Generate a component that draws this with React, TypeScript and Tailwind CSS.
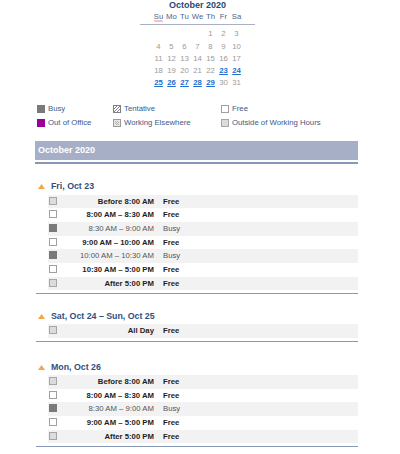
import React from "react";

type Kind = "free" | "busy" | "out";

function Sq({ kind }: { kind: Kind | "ooo" | "tent" | "else" }) {
  if (kind === "tent")
    return (
      <svg width="8" height="8" viewBox="0 0 8 8" className="block">
        <rect x="0.5" y="0.5" width="7" height="7" fill="#fff" stroke="#808080" />
        <path d="M1 4 L4 1 M1 7 L7 1 M4 7 L7 4" stroke="#808080" strokeWidth="1" />
      </svg>
    );
  if (kind === "else")
    return (
      <svg width="8" height="8" viewBox="0 0 8 8" className="block">
        <rect x="0.5" y="0.5" width="7" height="7" fill="#e8e8e8" stroke="#9a9a9a" />
        <rect x="2" y="2" width="1" height="1" fill="#b0b0b0" />
        <rect x="4" y="2" width="1" height="1" fill="#b0b0b0" />
        <rect x="3" y="3" width="1" height="1" fill="#b0b0b0" />
        <rect x="5" y="3" width="1" height="1" fill="#b0b0b0" />
        <rect x="2" y="4" width="1" height="1" fill="#b0b0b0" />
        <rect x="4" y="4" width="1" height="1" fill="#b0b0b0" />
        <rect x="3" y="5" width="1" height="1" fill="#b0b0b0" />
        <rect x="5" y="5" width="1" height="1" fill="#b0b0b0" />
      </svg>
    );
  const cls =
    kind === "busy"
      ? "bg-[#7a7a7a] border-[#7a7a7a]"
      : kind === "ooo"
      ? "bg-[#990099] border-[#990099]"
      : kind === "out"
      ? "bg-[#dcdcdc] border-[#a6a6a6]"
      : "bg-white border-[#a0a0a0]";
  return <div className={`w-[8px] h-[8px] border ${cls}`} />;
}

const weeks: (number | null)[][] = [
  [null, null, null, null, 1, 2, 3],
  [4, 5, 6, 7, 8, 9, 10],
  [11, 12, 13, 14, 15, 16, 17],
  [18, 19, 20, 21, 22, 23, 24],
  [25, 26, 27, 28, 29, 30, 31],
];

type Row = { time: string; status: string; kind: Kind };

const fri: Row[] = [
  { time: "Before 8:00 AM", status: "Free", kind: "out" },
  { time: "8:00 AM – 8:30 AM", status: "Free", kind: "free" },
  { time: "8:30 AM – 9:00 AM", status: "Busy", kind: "busy" },
  { time: "9:00 AM – 10:00 AM", status: "Free", kind: "free" },
  { time: "10:00 AM – 10:30 AM", status: "Busy", kind: "busy" },
  { time: "10:30 AM – 5:00 PM", status: "Free", kind: "free" },
  { time: "After 5:00 PM", status: "Free", kind: "out" },
];
const sat: Row[] = [{ time: "All Day", status: "Free", kind: "out" }];
const mon: Row[] = [
  { time: "Before 8:00 AM", status: "Free", kind: "out" },
  { time: "8:00 AM – 8:30 AM", status: "Free", kind: "free" },
  { time: "8:30 AM – 9:00 AM", status: "Busy", kind: "busy" },
  { time: "9:00 AM – 5:00 PM", status: "Free", kind: "free" },
  { time: "After 5:00 PM", status: "Free", kind: "out" },
];

function Section({ title, rows, mt }: { title: string; rows: Row[]; mt: string }) {
  return (
    <div className={mt}>
      <div className="flex items-center h-[12px] ml-[38px]">
        <svg width="7" height="5" viewBox="0 0 7 5" className="block">
          <path d="M0 5 L3.5 0 L7 5 Z" fill="#f0a84a" />
        </svg>
        <span className="ml-[6px] text-[8.8px] font-bold text-[#2f4f7f] leading-none">{title}</span>
      </div>
      <div className="mt-[2px] ml-[48px] w-[310px]">
        {rows.map((r, i) => (
          <div
            key={i}
            className={`relative h-[13.67px] flex ${i % 2 === 0 ? "bg-[#f2f2f2]" : "bg-white"}`}
          >
            <div className="pt-[2px] pl-[1px]">
              <Sq kind={r.kind} />
            </div>
            <div
              className={`absolute right-[204px] top-0 h-full flex items-center text-[7.75px] leading-none whitespace-nowrap ${
                r.kind === "busy" ? "text-[#555]" : "font-bold text-[#1e1e1e]"
              }`}
            >
              {r.time}
            </div>
            <div
              className={`absolute left-[115px] top-0 h-full flex items-center text-[7.75px] leading-none ${
                r.kind === "busy" ? "text-[#555]" : "font-bold text-[#1e1e1e]"
              }`}
            >
              {r.status}
            </div>
          </div>
        ))}
      </div>
      <div className="ml-[36px] w-[322px] mt-[2.5px] h-[1.5px] bg-[#8797b6]" />
    </div>
  );
}

export default function App() {
  return (
    <div
      className="w-[400px] h-[454px] bg-white overflow-hidden"
      style={{ fontFamily: '"Liberation Sans", Arial, sans-serif' }}
    >
      {/* mini calendar */}
      <div className="ml-[140px] w-[115px]">
        <div className="h-[10px] leading-[10px] text-center text-[9px] font-bold text-[#2b4774]">
          October 2020
        </div>
        <div className="mt-[2px] border-b border-[#a9b1c2] pb-[2px]">
          <div className="ml-[12px] grid grid-cols-[repeat(7,13px)] h-[10px] leading-[10px] text-[7.75px] text-[#4f6586] text-center">
            <span className="relative">
              Su
              <svg width="9" height="2" viewBox="0 0 9 2" className="absolute left-[2px] bottom-[0px]">
                <path d="M0 1.5 L1 0.5 L2 1.5 L3 0.5 L4 1.5 L5 0.5 L6 1.5 L7 0.5 L8 1.5 L9 0.5" stroke="#e03a3a" strokeWidth="0.7" fill="none" />
              </svg>
            </span>
            <span>Mo</span>
            <span>Tu</span>
            <span>We</span>
            <span>Th</span>
            <span>Fr</span>
            <span>Sa</span>
          </div>
        </div>
        <div className="mt-[3px] ml-[12px]">
          {weeks.map((w, wi) => (
            <div key={wi} className="grid grid-cols-[repeat(7,13px)] h-[12.25px] items-center text-[7.75px] text-center">
              {w.map((d, di) => {
                if (d === null) return <span key={di} />;
                const hi = d >= 23 && d <= 29;
                return (
                  <span
                    key={di}
                    className={
                      hi
                        ? "font-bold text-[#1c6fd0] underline decoration-[1px] underline-offset-[1px] leading-none"
                        : "text-[#9a9a9a] leading-none"
                    }
                  >
                    {d}
                  </span>
                );
              })}
            </div>
          ))}
        </div>
      </div>

      {/* legend */}
      <div className="mt-[13px] pl-[37px] grid grid-cols-[76px_108px_1fr] text-[7.75px] text-[#3c5a86]">
        {[
          ["busy", "Busy"],
          ["tent", "Tentative"],
          ["free", "Free"],
          ["ooo", "Out of Office"],
          ["else", "Working Elsewhere"],
          ["out", "Outside of Working Hours"],
        ].map(([k, t]) => (
          <div key={t} className="flex items-center h-[13.5px]">
            <Sq kind={k as any} />
            <span className="ml-[3px] leading-none">{t}</span>
          </div>
        ))}
      </div>

      {/* month bar */}
      <div className="mt-[12px] ml-[35px] w-[323px] h-[19px] bg-[#a7afc7] flex items-center pl-[3px]">
        <span className="text-[9px] font-bold text-white leading-none">October 2020</span>
      </div>
      <div className="ml-[35px] w-[323px] mt-[2px] h-[1.5px] bg-[#8797b6]" />

      <Section title="Fri, Oct 23" rows={fri} mt="mt-[17px]" />
      <Section title="Sat, Oct 24 – Sun, Oct 25" rows={sat} mt="mt-[16px]" />
      <Section title="Mon, Oct 26" rows={mon} mt="mt-[19px]" />
    </div>
  );
}
